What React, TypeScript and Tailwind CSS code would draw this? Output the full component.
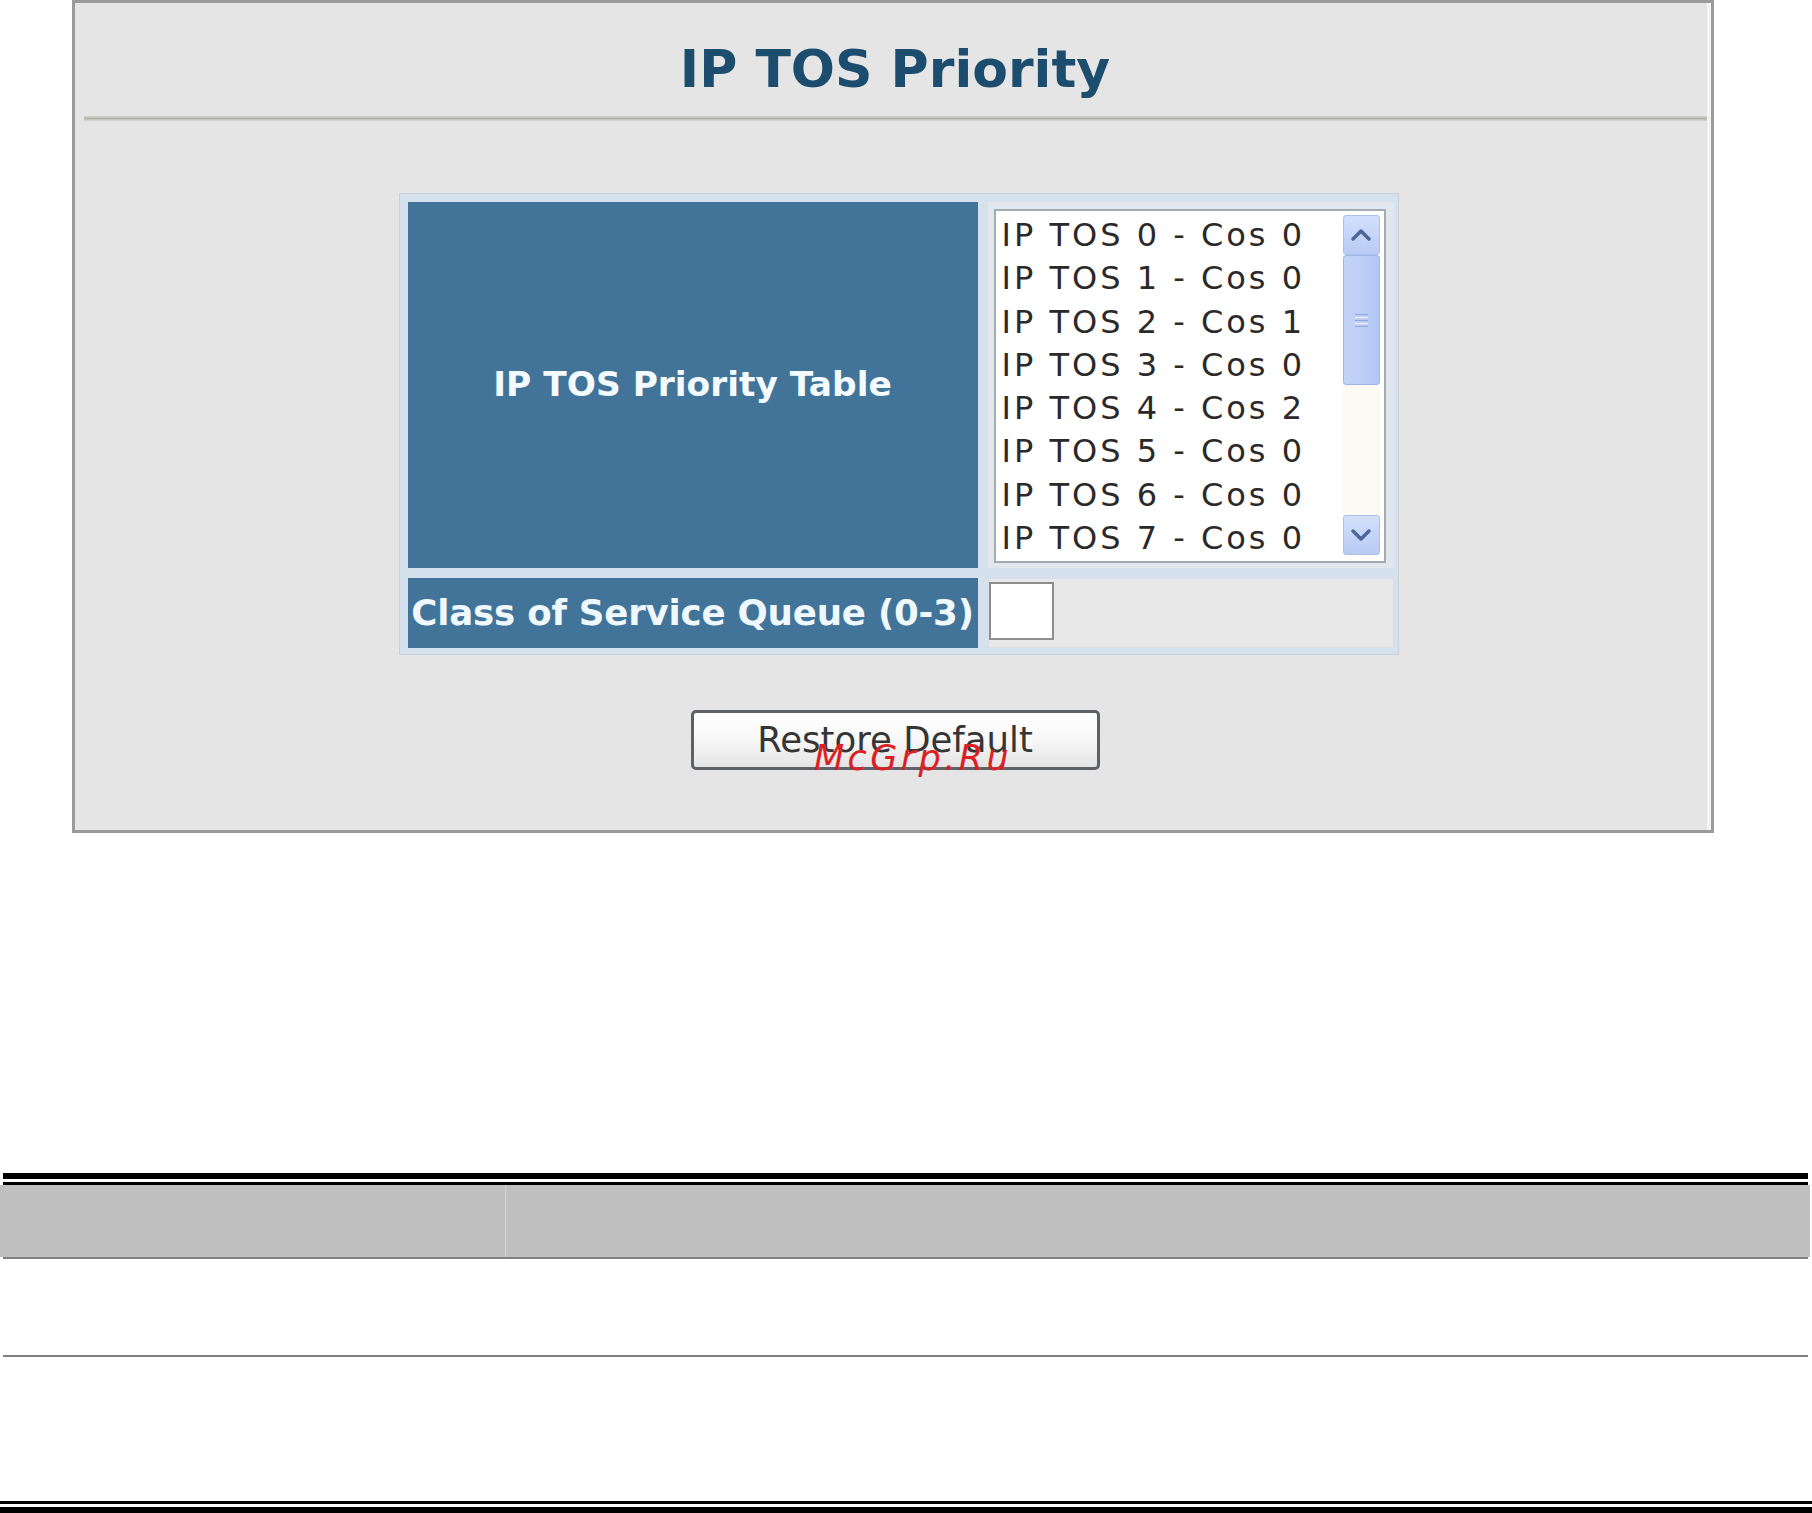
import React from "react";

const rows = [
  "IP TOS 0 - Cos 0",
  "IP TOS 1 - Cos 0",
  "IP TOS 2 - Cos 1",
  "IP TOS 3 - Cos 0",
  "IP TOS 4 - Cos 2",
  "IP TOS 5 - Cos 0",
  "IP TOS 6 - Cos 0",
  "IP TOS 7 - Cos 0",
];

function Chevron({ up }: { up: boolean }) {
  return (
    <svg width="22" height="14" viewBox="0 0 22 14">
      <polyline
        points={up ? "3,11 11,3 19,11" : "3,3 11,11 19,3"}
        fill="none"
        stroke="#4a6796"
        strokeWidth="3.5"
        strokeLinecap="round"
        strokeLinejoin="round"
      />
    </svg>
  );
}

function ListBox() {
  return (
    <div className="ml-[6px] mt-[7px] w-[392px] h-[354px] border-2 border-[#a3abb3] bg-white flex">
      <div className="flex-1 pl-[6px] pt-[3px] font-['DejaVu_Sans',sans-serif] text-[32px] tracking-[3px] text-[#2b2929]">
        {rows.map((r) => (
          <div key={r} className="h-[43.3px] leading-[43px] whitespace-nowrap">
            {r}
          </div>
        ))}
      </div>
      <div className="w-[37px] mr-[4px] mt-[4px] mb-[6px] flex flex-col">
        <div className="h-[40px] rounded-[3px] border border-[#aabfe9] bg-linear-to-b from-[#d3e0fc] to-[#b9cbf4] flex items-center justify-center">
          <Chevron up={true} />
        </div>
        <div className="h-[130px] rounded-[3px] border border-[#9fb6e6] bg-linear-to-r from-[#c4d4f8] via-[#bccff7] to-[#b0c6f3] flex items-center justify-center">
          <div className="flex flex-col gap-[2px]">
            <div className="w-[13px] h-[1px] bg-[#8ea6d8]" />
            <div className="w-[13px] h-[1px] bg-[#eef3ff]" />
            <div className="w-[13px] h-[1px] bg-[#8ea6d8]" />
            <div className="w-[13px] h-[1px] bg-[#eef3ff]" />
            <div className="w-[13px] h-[1px] bg-[#8ea6d8]" />
          </div>
        </div>
        <div className="flex-1 bg-[#fbfaf3]" />
        <div className="h-[40px] rounded-[3px] border border-[#aabfe9] bg-linear-to-b from-[#d3e0fc] to-[#b9cbf4] flex items-center justify-center">
          <Chevron up={false} />
        </div>
      </div>
    </div>
  );
}

export default function App() {
  return (
    <div className="relative w-[1812px] h-[1513px] bg-white overflow-hidden font-['DejaVu_Sans',sans-serif]">
      {/* Screenshot panel */}
      <div className="pl-[72px]">
        <div className="w-[1642px] h-[833px] border-[3px] border-[#9b9b9b] bg-[#e5e5e5] flex">
          <div className="flex-1 flex flex-col pl-[8px]">
            <div className="mt-[36px] h-[60px] leading-[60px] text-center text-[52px] font-bold text-[#1d4d6e] whitespace-nowrap">
              IP TOS Priority
            </div>
            <div className="mt-[17px] ml-[1px] h-[5px] bg-linear-to-b from-[#d6d7d1] via-[#b3b4ac] to-[#dadbd5]" />
            <div className="mt-[72px] flex justify-center">
              <div className="ml-[7px] w-[1000px] h-[462px] border border-[#c7d1da] bg-[#d5e1ec] pl-[8px] pt-[8px] pr-[4px] pb-[6px]">
                <div className="grid grid-cols-[570px_406px] grid-rows-[366px_70px] gap-[10px]">
                  <div className="bg-[#42749a] flex items-center justify-center text-[34.4px] font-bold text-[#f4fbff] whitespace-nowrap">
                    IP TOS Priority Table
                  </div>
                  <div className="bg-[#e1e7ec]">
                    <ListBox />
                  </div>
                  <div className="bg-[#42749a] flex items-center justify-center text-[35.6px] font-bold text-[#eef8fd] whitespace-nowrap tracking-[-0.2px]">
                    Class of Service Queue (0-3)
                  </div>
                  <div className="bg-[#e8e8e8] border border-[#dcdfe2]">
                    <div className="ml-[0px] mt-[3px] w-[65px] h-[58px] border-2 border-[#8d8d8d] bg-white" />
                  </div>
                </div>
              </div>
            </div>
            <div className="mt-[55px] flex justify-center">
              <div className="w-[409px] h-[60px] rounded-[5px] border-[3px] border-[#5e6266] bg-linear-to-b from-[#ffffff] via-[#f7f7f7] to-[#e4e4e4] flex items-center justify-center text-[35.5px] text-[#353535] whitespace-nowrap">
                Restore Default
              </div>
            </div>
          </div>
          <div className="w-[4px] bg-[#f4f4f4]" />
        </div>
      </div>

      {/* Watermark */}
      <div className="absolute left-[814px] top-[741px] text-[35px] leading-[35px] italic tracking-[3.4px] text-[#dc1f25] whitespace-nowrap">
        McGrp.Ru
      </div>

      {/* Document table */}
      <div className="mt-[340px]">
        <div className="ml-[3px] w-[1805px] h-[6px] bg-black" />
        <div className="h-[3px]" />
        <div className="ml-[3px] w-[1805px] h-[3px] bg-black" />
        <div className="w-[1810px] h-[72px] bg-[#c0c0c0] flex">
          <div className="w-[505px]" />
          <div className="w-[1px] bg-[#d8d8d8]" />
          <div className="flex-1" />
        </div>
        <div className="ml-[3px] w-[1805px] h-[2px] bg-[#808080]" />
        <div className="h-[96px]" />
        <div className="ml-[3px] w-[1805px] h-[2px] bg-[#808080]" />
        <div className="h-[144px]" />
        <div className="w-[1812px] h-[3px] bg-black" />
        <div className="h-[3px]" />
        <div className="w-[1812px] h-[6px] bg-black" />
      </div>
    </div>
  );
}
